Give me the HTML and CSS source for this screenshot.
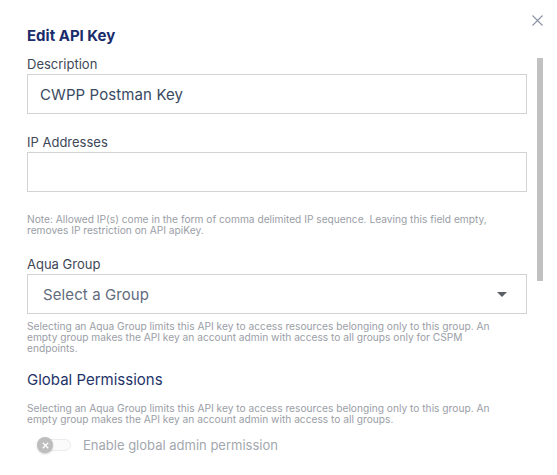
FILE: index.html
```html
<!DOCTYPE html>
<html>
<head>
<meta charset="utf-8">
<link rel="stylesheet" href="styles.css">
</head>
<body>
<div class="modal">
  <button class="close" aria-label="Close">
    <svg width="11" height="11" viewBox="0 0 11 11"><path d="M0.5 0.5 L10.5 10.5 M10.5 0.5 L0.5 10.5" stroke="#8a93a5" stroke-width="1.1" fill="none"/></svg>
  </button>
  <div class="scroll-thumb"></div>
  <div class="form">
    <h1 class="title">Edit API Key</h1>

    <div class="field">
      <label class="label">Description</label>
      <div class="input">CWPP Postman Key</div>
    </div>

    <div class="field field-ip">
      <label class="label">IP Addresses</label>
      <div class="input"></div>
    </div>
    <p class="note note-ip">Note: Allowed IP(s) come in the form of comma delimited IP sequence. Leaving this field empty,<br>removes IP restriction on API apiKey.</p>

    <div class="field field-group">
      <label class="label">Aqua Group</label>
      <div class="input select">
        <span class="placeholder">Select a Group</span>
        <svg class="caret" width="10" height="5" viewBox="0 0 10 5"><path d="M0 0 H10 L5 5 Z" fill="#5b5f66"/></svg>
      </div>
    </div>
    <p class="note note-group">Selecting an Aqua Group limits this API key to access resources belonging only to this group. An<br>empty group makes the API key an account admin with access to all groups only for CSPM<br>endpoints.</p>

    <h2 class="section">Global Permissions</h2>
    <p class="note note-global">Selecting an Aqua Group limits this API key to access resources belonging only to this group. An<br>empty group makes the API key an account admin with access to all groups.</p>

    <div class="toggle-row">
      <span class="toggle">
        <span class="track"></span>
        <span class="knob">
          <svg width="7" height="7" viewBox="0 0 7 7"><path d="M0.8 0.8 L6.2 6.2 M6.2 0.8 L0.8 6.2" stroke="#fff" stroke-width="1.3" fill="none"/></svg>
        </span>
      </span>
      <span class="toggle-label">Enable global admin permission</span>
    </div>
  </div>
</div>
</body>
</html>
```

FILE: styles.css
```css
* { box-sizing: border-box; }
html, body {
  margin: 0;
  padding: 0;
  background: #fff;
}
body {
  font-family: Inter, "Noto Sans", sans-serif;
  width: 557px;
  height: 475px;
  overflow: hidden;
}
.modal {
  position: relative;
  width: 557px;
  height: 475px;
  padding: 27px 30px 0 27px;
}
.close {
  position: absolute;
  top: 15px;
  left: 532px;
  padding: 0;
  border: 0;
  background: none;
  width: 11px;
  height: 11px;
  display: block;
}
.close svg { display: block; }
.scroll-thumb {
  position: absolute;
  left: 537px;
  top: 58px;
  width: 6px;
  height: 223px;
  background: #c1c1c1;
}
.form {
  display: flex;
  flex-direction: column;
  width: 500px;
}
.title {
  margin: 0;
  font-size: 15px;
  line-height: 18px;
  font-weight: 700;
  color: #1b2c6b;
}
.field {
  display: flex;
  flex-direction: column;
  gap: 2px;
  margin-top: 11px;
}
.field-ip { margin-top: 20px; }
.field-group { margin-top: 20px; }
.label {
  font-size: 13px;
  line-height: 16px;
  color: #3e4757;
}
.input {
  height: 40px;
  border: 1px solid #d3d3d3;
  background: #fff;
  display: flex;
  align-items: center;
  padding: 0 12px;
  font-size: 15px;
  color: #3a4a63;
  letter-spacing: 0.1px;
}
.select {
  justify-content: space-between;
  padding: 0 19px 0 15px;
}
.placeholder {
  color: #616b7d;
}
.caret { display: block; }
.note {
  margin: 0;
  font-size: 10.2px;
  line-height: 11px;
  color: #9a9ea6;
}
.note-ip { margin-top: 22px; }
.note-group { margin-top: 7px; }
.section {
  margin: 17px 0 0;
  font-size: 15px;
  line-height: 18px;
  font-weight: 400;
  color: #1e3468;
}
.note-global { margin-top: 14px; }
.toggle-row {
  display: flex;
  align-items: center;
  gap: 12px;
  margin-top: 12px;
  padding-left: 10px;
}
.toggle {
  position: relative;
  width: 34px;
  height: 16px;
  display: block;
}
.track {
  position: absolute;
  left: 2px;
  top: 2px;
  width: 32px;
  height: 12px;
  border-radius: 6px;
  background: #fbfbfb;
  border: 1px solid #ececec;
}
.knob {
  position: absolute;
  left: 0;
  top: 0;
  width: 16px;
  height: 16px;
  border-radius: 50%;
  background: #bdbdbd;
  box-shadow: 0 1px 2px rgba(0,0,0,0.2);
  display: flex;
  align-items: center;
  justify-content: center;
}
.knob svg { display: block; }
.toggle-label {
  font-size: 13px;
  line-height: 16px;
  color: #a3a7ae;
}
```
